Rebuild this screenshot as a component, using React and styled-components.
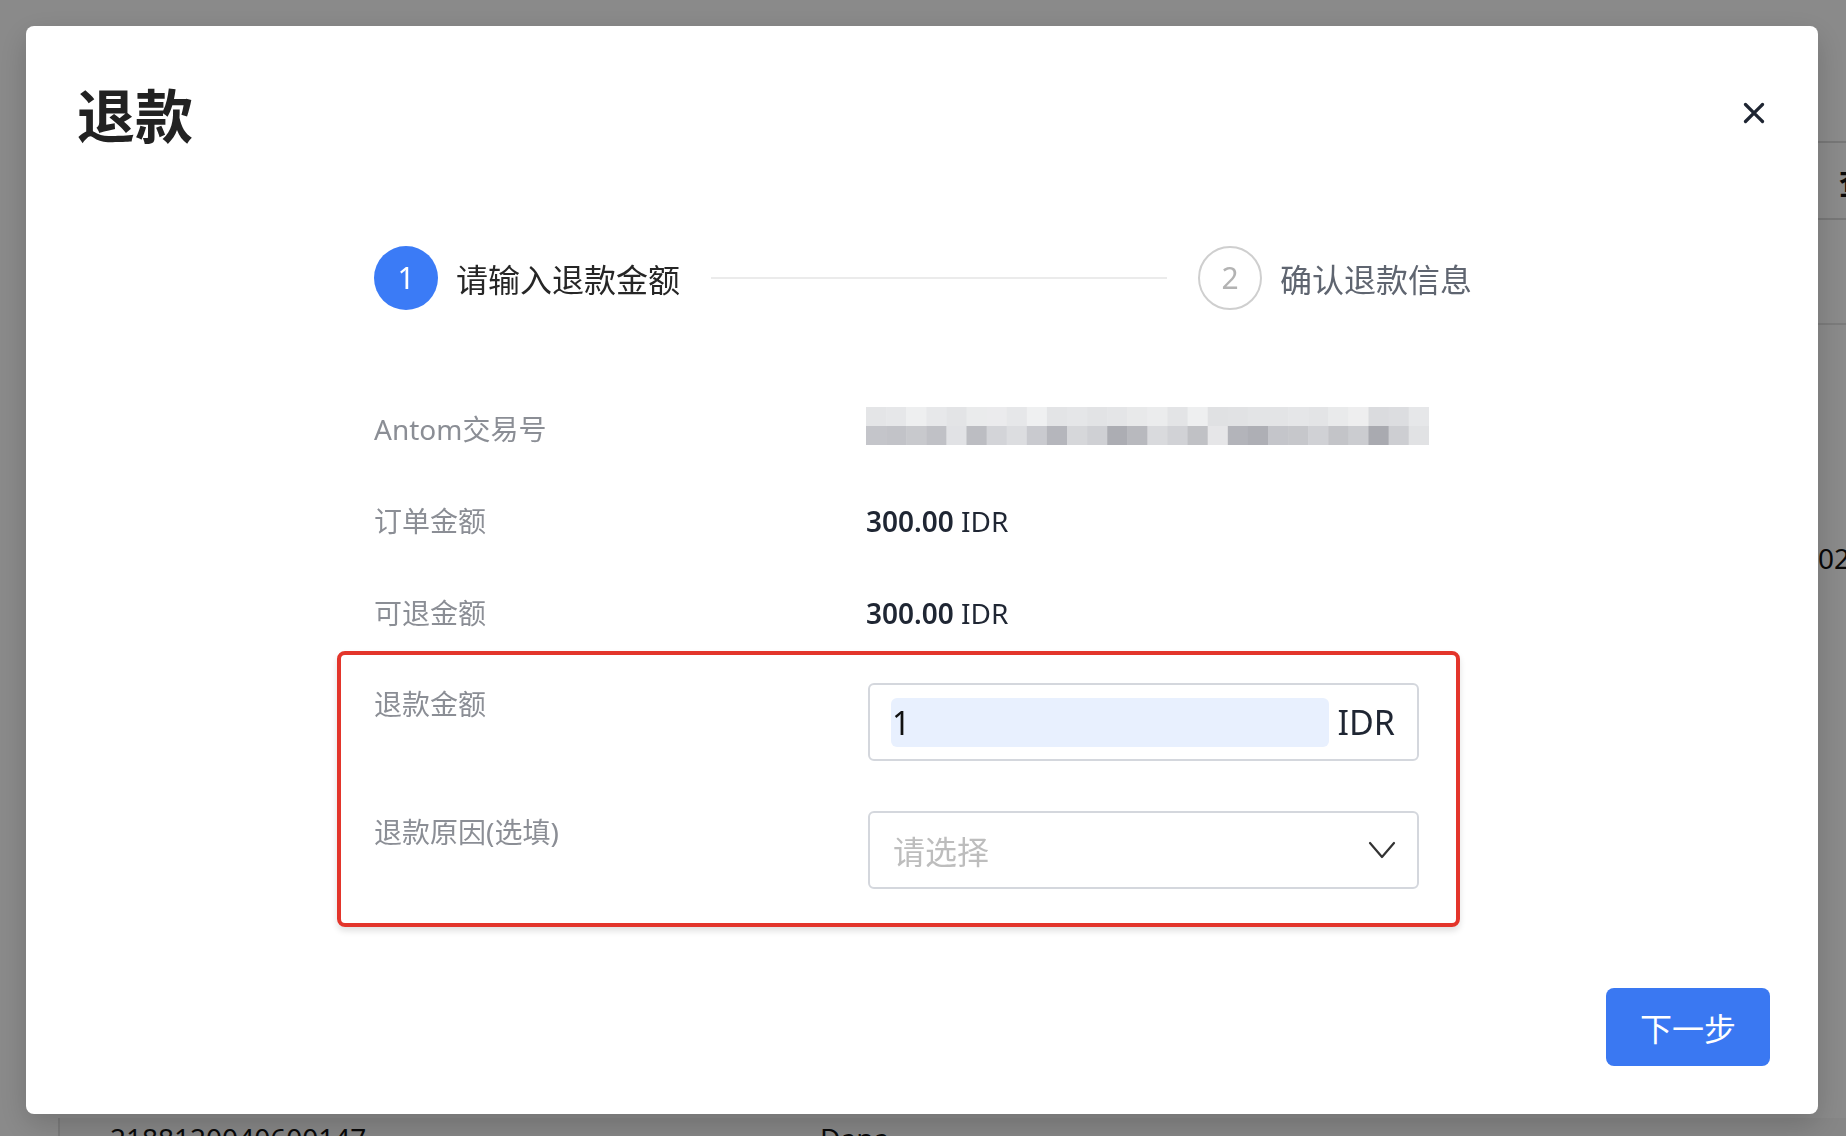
import styled, { createGlobalStyle } from "styled-components";

const GlobalStyle = createGlobalStyle`
  html, body {
    margin: 0;
    padding: 0;
    width: 1846px;
    height: 1136px;
    overflow: hidden;
    background: #ffffff;
    font-family: "Noto Sans", "Noto Sans CJK SC", sans-serif;
  }
  * {
    box-sizing: border-box;
  }
`;

/* ---------- page behind the dialog ---------- */

const Page = styled.div`
  width: 1846px;
  height: 1136px;
  display: flex;
  overflow: hidden;
  background: #ffffff;
`;

const Sidebar = styled.div`
  width: 58px;
  flex-shrink: 0;
  background: #ffffff;
`;

const Main = styled.div`
  flex: 1;
  display: flex;
  flex-direction: column;
  min-width: 0;
`;

const TopArea = styled.div`
  height: 143px;
  flex-shrink: 0;
  border-bottom: 2px solid #dcdcdc;
`;

const TableHead = styled.div`
  height: 77px;
  flex-shrink: 0;
  display: flex;
  align-items: center;
  padding-left: 1781px;
  border-bottom: 2px solid #dcdcdc;
  font-size: 30px;
  font-weight: 700;
  color: #111111;
  white-space: nowrap;
`;

const FilterRow = styled.div`
  height: 105px;
  flex-shrink: 0;
  border-bottom: 2px solid #e4e4e4;
`;

const DataRow = styled.div`
  height: ${(p) => p.$height}px;
  flex-shrink: 0;
  display: flex;
  align-items: flex-start;
  padding-top: ${(p) => p.$top}px;
  border-left: ${(p) => (p.$edge ? "2px solid #e2e2e2" : "none")};
  background: ${(p) => (p.$edge ? "#f7f7f7" : "transparent")};
  font-size: 28px;
  line-height: 40px;
  color: #111111;
  white-space: nowrap;
`;

const Cell = styled.div`
  width: ${(p) => p.$width}px;
  flex-shrink: 0;
  padding-left: ${(p) => p.$pad || 0}px;
`;

/* ---------- dialog ---------- */

const Overlay = styled.div`
  position: fixed;
  inset: 0;
  background: rgba(0, 0, 0, 0.46);
  display: flex;
  padding: 26px 28px 22px 26px;
`;

const Modal = styled.div`
  flex: 1;
  display: flex;
  flex-direction: column;
  background: #ffffff;
  border-radius: 8px;
  box-shadow: 0 10px 30px rgba(0, 0, 0, 0.18);
`;

const Header = styled.div`
  display: flex;
  align-items: center;
  justify-content: space-between;
  padding: 47px 53px 0 51px;
`;

const Title = styled.h1`
  margin: 0;
  font-family: "Noto Sans CJK SC", sans-serif;
  font-size: 58px;
  line-height: 80px;
  font-weight: 700;
  color: #222222;
`;

const CloseButton = styled.button`
  width: 22px;
  height: 22px;
  padding: 0;
  border: none;
  background: transparent;
  display: flex;
  cursor: pointer;
`;

const Body = styled.div`
  display: flex;
  flex-direction: column;
  padding-left: 348px;
`;

const Steps = styled.div`
  width: 1098px;
  margin-top: 93px;
  display: flex;
  align-items: center;
`;

const StepCircle = styled.div`
  width: 64px;
  height: 64px;
  flex-shrink: 0;
  border-radius: 50%;
  display: flex;
  align-items: center;
  justify-content: center;
  font-size: 30px;
  line-height: 1;
  background: ${(p) => (p.$active ? "#3b7bf6" : "#ffffff")};
  border: ${(p) => (p.$active ? "none" : "2px solid #cfcfcf")};
  color: ${(p) => (p.$active ? "#ffffff" : "#b3b3b3")};
`;

const StepText = styled.span`
  margin-left: 18px;
  font-family: "Noto Sans CJK SC", sans-serif;
  font-size: 32px;
  line-height: 44px;
  white-space: nowrap;
  color: ${(p) => (p.$active ? "#262626" : "#5f6570")};
`;

const StepLine = styled.div`
  flex: 1;
  height: 2px;
  margin: 0 31px;
  background: #ebebeb;
`;

const InfoList = styled.div`
  margin-top: 99px;
  display: flex;
  flex-direction: column;
  gap: 52px;
`;

const Row = styled.div`
  display: flex;
  align-items: flex-start;
`;

const Label = styled.div`
  width: 492px;
  flex-shrink: 0;
  font-family: "Noto Sans", "Noto Sans CJK SC", sans-serif;
  font-size: 28px;
  line-height: 40px;
  color: #8b8e95;
  white-space: nowrap;
`;

const Value = styled.div`
  font-size: 28px;
  line-height: 40px;
  color: #1f2633;
  white-space: nowrap;
`;

const Amount = styled.span`
  font-weight: 600;
`;

const Mosaic = styled.svg`
  display: block;
  margin-top: -2px;
`;

const Highlight = styled.div`
  margin-top: 18px;
  margin-left: -37px;
  width: 1123px;
  border: 4px solid #e3352b;
  border-radius: 8px;
  padding: 28px 37px 34px 33px;
  display: flex;
  flex-direction: column;
  gap: 50px;
  box-shadow: 0 4px 6px rgba(0, 0, 0, 0.12);
`;

const FieldLabel = styled(Label)`
  width: 494px;
  padding-top: 1px;
`;

const InputBox = styled.div`
  width: 551px;
  height: 78px;
  border: 2px solid #d4d7dd;
  border-radius: 6px;
  display: flex;
  align-items: center;
  padding: 0 22px 0 21px;
  gap: 9px;
`;

const AmountInput = styled.input`
  flex: 1;
  min-width: 0;
  height: 49px;
  border: none;
  outline: none;
  border-radius: 6px;
  background: #e8f0fe;
  padding: 0 0 0 1px;
  font-family: "Noto Sans", sans-serif;
  font-size: 32px;
  color: #111111;
`;

const Suffix = styled.span`
  font-family: "Noto Sans", sans-serif;
  font-size: 34px;
  line-height: 1;
  color: #1f2633;
`;

const SelectBox = styled.div`
  width: 551px;
  height: 78px;
  border: 2px solid #d4d7dd;
  border-radius: 6px;
  display: flex;
  align-items: center;
  justify-content: space-between;
  padding: 0 21px 0 23px;
  cursor: pointer;
`;

const Placeholder = styled.span`
  font-family: "Noto Sans CJK SC", sans-serif;
  font-size: 32px;
  color: #bdbdbd;
`;

const Footer = styled.div`
  margin-top: auto;
  display: flex;
  justify-content: flex-end;
  padding: 0 48px 48px 0;
`;

const PrimaryButton = styled.button`
  width: 164px;
  height: 78px;
  border: none;
  border-radius: 8px;
  background: #3a78f2;
  color: #ffffff;
  font-family: "Noto Sans CJK SC", sans-serif;
  font-size: 32px;
  cursor: pointer;
`;

const topCells = [
  "#e4e5e7", "#e6e7e9", "#eeeff0", "#e7e8ea", "#e3e4e6", "#eaebec", "#ebebed",
  "#e6e7e9", "#eff0f1", "#e3e4e6", "#e5e6e8", "#e2e3e5", "#e4e5e7", "#e8e9ea",
  "#ebeced", "#e3e4e6", "#eeeff0", "#e0e1e3", "#e1e2e4", "#e3e4e6", "#e3e4e6",
  "#e5e6e8", "#e3e4e6", "#e9eaeb", "#eeeeef", "#dadbde", "#dcdde0", "#e6e7e9",
];

const bottomCells = [
  "#c4c5ca", "#c2c3c8", "#c8c9cd", "#c0c1c6", "#e1e2e5", "#bcbdc2", "#d3d4d8",
  "#dcdde0", "#c9cacf", "#b5b6bc", "#d6d7da", "#cfd0d4", "#acadb3", "#b8b9be",
  "#d9dadd", "#d1d2d6", "#c0c1c5", "#e6e6e8", "#b3b4ba", "#aeafb5", "#c4c5ca",
  "#c6c7cb", "#d0d1d5", "#c3c4c8", "#cbccd0", "#a9aab0", "#cdced2", "#e1e2e4",
];

function BlurredId() {
  const w = 20.1;
  return (
    <Mosaic width="563" height="38" viewBox="0 0 563 38">
      {topCells.map((c, i) => (
        <rect key={"t" + i} x={i * w} y="0" width={w + 0.5} height="19" fill={c} />
      ))}
      {bottomCells.map((c, i) => (
        <rect key={"b" + i} x={i * w} y="19" width={w + 0.5} height="19" fill={c} />
      ))}
    </Mosaic>
  );
}

function CloseIcon() {
  return (
    <svg width="22" height="22" viewBox="0 0 22 22">
      <path
        d="M2.5 2.5 L19.5 19.5 M19.5 2.5 L2.5 19.5"
        stroke="#1e2532"
        strokeWidth="3.2"
        strokeLinecap="round"
      />
    </svg>
  );
}

function Chevron() {
  return (
    <svg width="28" height="20" viewBox="0 0 28 20">
      <path
        d="M2 3 L14 17 L26 3"
        fill="none"
        stroke="#333333"
        strokeWidth="2.2"
        strokeLinecap="round"
        strokeLinejoin="round"
      />
    </svg>
  );
}

export default function App() {
  return (
    <>
      <GlobalStyle />
      <Page>
        <Sidebar />
        <Main>
          <TopArea />
          <TableHead>查询时间</TableHead>
          <FilterRow />
          <DataRow $height={793} $top={213}>
            <Cell $width={1687} />
            <Cell $width={300}>2024-02-26 15:30:21</Cell>
          </DataRow>
          <DataRow $height={100} $top={0} $edge>
            <Cell $width={760} $pad={50}>2188120040600147</Cell>
            <Cell $width={400}>Dana</Cell>
          </DataRow>
        </Main>
      </Page>

      <Overlay>
        <Modal>
          <Header>
            <Title>退款</Title>
            <CloseButton aria-label="关闭">
              <CloseIcon />
            </CloseButton>
          </Header>

          <Body>
            <Steps>
              <StepCircle $active>1</StepCircle>
              <StepText $active>请输入退款金额</StepText>
              <StepLine />
              <StepCircle>2</StepCircle>
              <StepText>确认退款信息</StepText>
            </Steps>

            <InfoList>
              <Row>
                <Label>Antom交易号</Label>
                <BlurredId />
              </Row>
              <Row>
                <Label>订单金额</Label>
                <Value>
                  <Amount>300.00</Amount> IDR
                </Value>
              </Row>
              <Row>
                <Label>可退金额</Label>
                <Value>
                  <Amount>300.00</Amount> IDR
                </Value>
              </Row>
            </InfoList>

            <Highlight>
              <Row>
                <FieldLabel>退款金额</FieldLabel>
                <InputBox>
                  <AmountInput defaultValue="1" />
                  <Suffix>IDR</Suffix>
                </InputBox>
              </Row>
              <Row>
                <FieldLabel>退款原因(选填)</FieldLabel>
                <SelectBox>
                  <Placeholder>请选择</Placeholder>
                  <Chevron />
                </SelectBox>
              </Row>
            </Highlight>
          </Body>

          <Footer>
            <PrimaryButton>下一步</PrimaryButton>
          </Footer>
        </Modal>
      </Overlay>
    </>
  );
}
